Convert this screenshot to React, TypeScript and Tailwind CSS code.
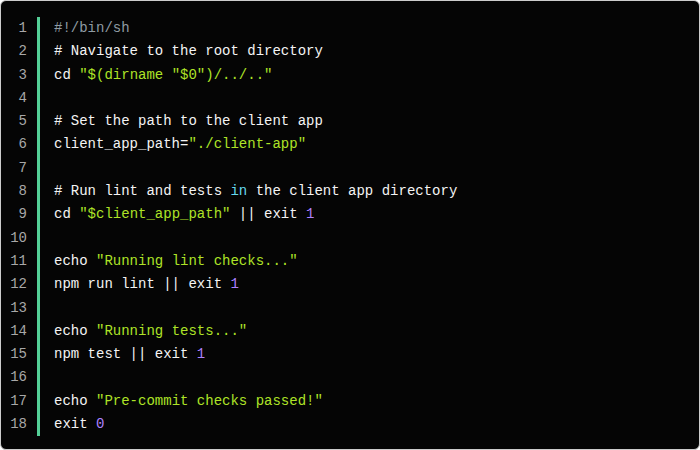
type Tok = { t: string; c?: string };

const W = "text-[#f4f4f4]";
const STR = "text-[#aee327]";
const NUM = "text-[#ae81ff]";
const KW = "text-[#66d9ef]";
const COM = "text-[#8f9ba3]";

const lines: Tok[][] = [
  [{ t: "#!/bin/sh", c: COM }],
  [{ t: "# Navigate to the root directory" }],
  [{ t: "cd " }, { t: '"$(dirname "$0")/../.."', c: STR }],
  [],
  [{ t: "# Set the path to the client app" }],
  [{ t: "client_app_path=" }, { t: '"./client-app"', c: STR }],
  [],
  [{ t: "# Run lint and tests " }, { t: "in", c: KW }, { t: " the client app directory" }],
  [{ t: "cd " }, { t: '"$client_app_path"', c: STR }, { t: " || exit " }, { t: "1", c: NUM }],
  [],
  [{ t: "echo " }, { t: '"Running lint checks..."', c: STR }],
  [{ t: "npm run lint || exit " }, { t: "1", c: NUM }],
  [],
  [{ t: "echo " }, { t: '"Running tests..."', c: STR }],
  [{ t: "npm test || exit " }, { t: "1", c: NUM }],
  [],
  [{ t: "echo " }, { t: '"Pre-commit checks passed!"', c: STR }],
  [{ t: "exit " }, { t: "0", c: NUM }],
];

export default function App() {
  return (
    <div className="w-[700px] h-[450px] bg-white">
      <div
        className="w-full h-full bg-[#050505] border border-[#cdcdcd] rounded-[6px] pt-[16px] flex text-[14px] leading-[23.3px]"
        style={{ fontFamily: '"Liberation Mono", "DejaVu Sans Mono", monospace' }}
      >
        {/* gutter */}
        <div className="w-[26px] text-right text-[#a8a8a8]">
          {lines.map((_, i) => (
            <div key={i}>{i + 1}</div>
          ))}
        </div>
        {/* code */}
        <div className="ml-[10px] self-start border-l-[3px] border-[#54cf97] pl-[14px]">
          {lines.map((toks, i) => (
            <div key={i} className={`whitespace-pre ${W}`}>
              {toks.length === 0
                ? " "
                : toks.map((k, j) => (
                    <span key={j} className={k.c ?? ""}>
                      {k.t}
                    </span>
                  ))}
            </div>
          ))}
        </div>
      </div>
    </div>
  );
}
